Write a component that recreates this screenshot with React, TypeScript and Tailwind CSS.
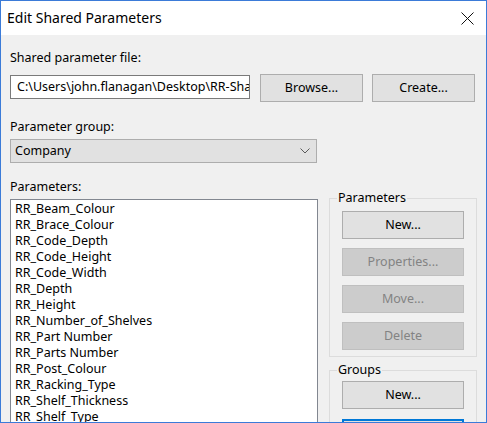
const params = [
  'RR_Beam_Colour',
  'RR_Brace_Colour',
  'RR_Code_Depth',
  'RR_Code_Height',
  'RR_Code_Width',
  'RR_Depth',
  'RR_Height',
  'RR_Number_of_Shelves',
  'RR_Part Number',
  'RR_Parts Number',
  'RR_Post_Colour',
  'RR_Racking_Type',
  'RR_Shelf_Thickness',
  'RR_Shelf_Type',
];

const font = { fontFamily: '"Noto Sans", "Open Sans", sans-serif' };

function WinButton({ label, disabled = false, focused = false }: { label: string; disabled?: boolean; focused?: boolean }) {
  return (
    <button
      className={
        'h-[28px] w-full shrink-0 text-[12.5px] leading-none ' +
        (disabled
          ? 'border bg-[#cccccc] border-[#bfbfbf] text-[#838383]'
          : focused
            ? 'border-2 bg-[#e1e1e1] border-[#0078d7] text-black'
            : 'border bg-[#e1e1e1] border-[#adadad] text-black')
      }
    >
      {label}
    </button>
  );
}

export default function App() {
  return (
    <div className="w-[487px] h-[423px] overflow-hidden border border-[#3b7bd8] bg-[#f0f0f0] flex flex-col text-black" style={font}>
      <div className="h-[34px] shrink-0 bg-white flex items-center justify-between pl-[6px] pr-[12px]">
        <span className="text-[14px] leading-none">Edit Shared Parameters</span>
        <svg width="13" height="13" viewBox="0 0 13 13" className="mt-[1px]">
          <path d="M0.5 0.5 L12.5 12.5 M12.5 0.5 L0.5 12.5" stroke="#111" strokeWidth="1" />
        </svg>
      </div>

      <div className="flex-1 flex flex-col px-[9px] pt-[15px] text-[12.5px]">
        <div className="leading-[16px]">Shared parameter file:</div>
        <div className="flex items-start mt-[8px]">
          <div className="w-[240px] h-[24px] mt-[1px] bg-white border border-[#7a7a7a] pl-[6px] flex items-center overflow-hidden whitespace-nowrap">
            C:\Users\john.flanagan\Desktop\RR-Sha
          </div>
          <div className="w-[103px] ml-[10px]"><WinButton label="Browse..." /></div>
          <div className="w-[103px] ml-[9px]"><WinButton label="Create..." /></div>
        </div>

        <div className="leading-[16px] mt-[17px]">Parameter group:</div>
        <div className="w-[307px] h-[24px] mt-[4px] bg-[#e1e1e1] border border-[#adadad] pl-[4px] pr-[6px] flex items-center justify-between">
          <span>Company</span>
          <svg width="10" height="6" viewBox="0 0 10 6">
            <path d="M0.5 0.5 L5 5 L9.5 0.5" fill="none" stroke="#5a5a5a" strokeWidth="1" />
          </svg>
        </div>

        <div className="flex items-start mt-[16px]">
          <div className="flex flex-col">
            <div className="leading-[16px]">Parameters:</div>
            <div className="w-[308px] h-[240px] mt-[4px] bg-white border border-[#828790] pt-[1px] pl-[4px] overflow-hidden">
              {params.map((p) => (
                <div key={p} className="h-[16px] leading-[16px] whitespace-nowrap">{p}</div>
              ))}
            </div>
          </div>

          <div className="flex flex-col ml-[11px] mt-[11px] w-[148px]">
            <fieldset className="border border-[#dcdcdc] px-[12px] pt-[5px] pb-[6px] flex flex-col gap-[9px]">
              <legend className="-ml-[5px] px-[1px] leading-[16px]">Parameters</legend>
              <WinButton label="New..." />
              <WinButton label="Properties..." disabled />
              <WinButton label="Move..." disabled />
              <WinButton label="Delete" disabled />
            </fieldset>
            <fieldset className="mt-[5px] border border-[#dcdcdc] px-[12px] pt-[3px] pb-[6px] flex flex-col gap-[10px]">
              <legend className="-ml-[5px] px-[1px] leading-[16px]">Groups</legend>
              <WinButton label="New..." />
              <WinButton label="" focused />
            </fieldset>
          </div>
        </div>
      </div>
    </div>
  );
}
